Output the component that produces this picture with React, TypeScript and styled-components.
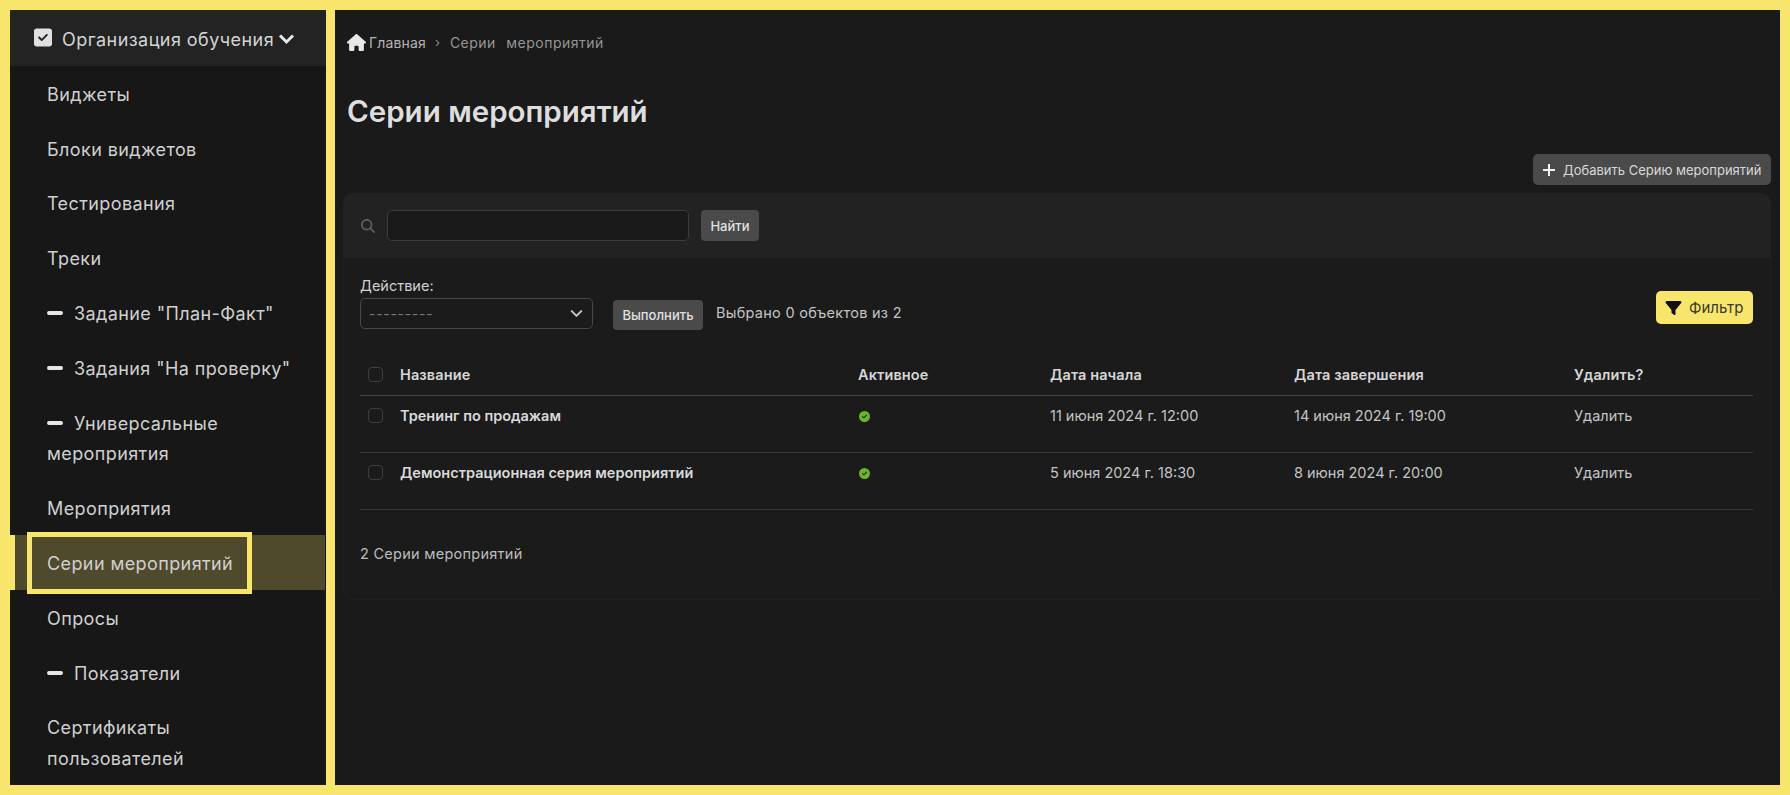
import styled, { createGlobalStyle } from "styled-components";
import { FaHouse, FaFilter, FaMagnifyingGlass, FaCircleCheck, FaSquareCheck } from "react-icons/fa6";
import { FiChevronDown } from "react-icons/fi";

const GlobalStyle = createGlobalStyle`
    html, body {
        margin: 0;
        padding: 0;
        background: #f7e66b;
    }
    body {
        font-family: Inter, "Noto Sans", "Liberation Sans", sans-serif;
        color: #d4d4d4;
    }
    * {
        box-sizing: border-box;
    }
`;

const Page = styled.div`
    width: 1790px;
    height: 795px;
    padding: 10px;
    display: grid;
    grid-template-columns: 316px 1445px;
    column-gap: 9px;
    background: #f7e66b;
    overflow: hidden;
`;

const Sidebar = styled.nav`
    background: #171717;
    overflow: hidden;
    display: flex;
    flex-direction: column;
`;

const SidebarHeader = styled.div`
    height: 56px;
    background: #232323;
    display: flex;
    align-items: center;
    padding-left: 24px;
    font-size: 18px;
    letter-spacing: 0.45px;
    color: #d4d4d4;
`;

const HeaderCheck = styled(FaSquareCheck)`
    width: 18px;
    height: 21px;
    color: #e0e0e0;
    margin-right: 10px;
`;

const HeaderText = styled.span`
    padding-top: 4px;
`;

const HeaderChevron = styled.svg`
    width: 17px;
    height: 12px;
    margin: 3px 0 0 4px;
    color: #e8e8e8;
`;

const MenuItem = styled.div<{ $active?: boolean }>`
    padding: 14px 30px 10px ${(p) => (p.$active ? "32px" : "37px")};
    font-size: 18px;
    line-height: 30.8px;
    letter-spacing: 0.4px;
    color: #d0d0d0;
    background: ${(p) => (p.$active ? "#4f4a2c" : "transparent")};
    border-left: ${(p) => (p.$active ? "5px solid #f7e66b" : "0")};
    margin-right: ${(p) => (p.$active ? "1px" : "0")};
    position: relative;
`;

const Dash = styled.span`
    display: inline-block;
    width: 16px;
    height: 4px;
    border-radius: 2px;
    background: #e6e6e6;
    margin-right: 11px;
    vertical-align: 5px;
`;

const Callout = styled.div`
    position: absolute;
    left: 12px;
    top: -3px;
    width: 225px;
    height: 62px;
    border: 5px solid #f7e66b;
    pointer-events: none;
`;

const Main = styled.main`
    background: #1a1a1a;
    padding: 0 9px 0 8px;
`;

const Breadcrumbs = styled.div`
    display: flex;
    align-items: center;
    height: 20px;
    margin: 22px 0 0 4px;
    font-size: 14px;
`;

const HomeIcon = styled(FaHouse)`
    width: 19px;
    height: 17px;
    color: #e8e8e8;
    margin-right: 3px;
`;

const Crumb = styled.span<{ $current?: boolean }>`
    color: ${(p) => (p.$current ? "#969696" : "#b4b4b4")};
    word-spacing: ${(p) => (p.$current ? "6px" : "0")};
    letter-spacing: ${(p) => (p.$current ? "0.5px" : "0.15px")};
`;

const CrumbSep = styled.span`
    margin: 0 10px 0 9px;
    color: #8a8a8a;
    font-size: 13px;
`;

const Title = styled.h1`
    margin: 37px 0 0 4px;
    height: 44px;
    font-size: 29.5px;
    line-height: 44px;
    font-weight: 600;
    color: #dedede;
`;

const Toolbar = styled.div`
    display: flex;
    justify-content: flex-end;
    margin-top: 21px;
    height: 31px;
`;

const AddButton = styled.button`
    width: 238px;
    height: 31px;
    background: #4a4a4a;
    border: 0;
    border-radius: 5px;
    color: #d9d9d9;
    font: inherit;
    font-size: 13px;
    display: flex;
    align-items: center;
    padding: 0 0 0 10px;
`;

const PlusIcon = styled.svg`
    width: 12px;
    height: 12px;
    color: #f2f2f2;
    margin-right: 8px;
`;

const Card = styled.section`
    margin-top: 8px;
    height: 407px;
    background: #1b1b1b;
    border-radius: 10px;
    box-shadow: inset 0 0 0 1px #1f1f1f;
    overflow: hidden;
`;

const SearchBar = styled.div`
    height: 65px;
    background: #222222;
    display: flex;
    align-items: center;
    padding-left: 18px;
`;

const SearchIcon = styled(FaMagnifyingGlass)`
    width: 14px;
    height: 14px;
    color: #5f5f5f;
    margin-right: 12px;
`;

const SearchInput = styled.div`
    width: 302px;
    height: 31px;
    background: #191919;
    border: 1px solid #3d3d3d;
    border-radius: 5px;
    margin-right: 12px;
`;

const GreyButton = styled.button<{ $wide?: boolean }>`
    height: ${(p) => (p.$wide ? "30px" : "31px")};
    width: ${(p) => (p.$wide ? "90px" : "58px")};
    background: #4a4a4a;
    border: 0;
    border-radius: 4px;
    color: #e0e0e0;
    font: inherit;
    font-size: 13px;
    font-weight: 500;
    padding: 0;
`;

const CardBody = styled.div`
    padding: 21px 18px 0 17px;
`;

const ActionRow = styled.div`
    display: flex;
    align-items: flex-end;
    height: 50px;
`;

const ActionField = styled.div`
    display: flex;
    flex-direction: column;
`;

const ActionLabel = styled.label`
    font-size: 14.5px;
    line-height: 19px;
    color: #d0d0d0;
    margin-bottom: 3px;
`;

const Select = styled.div`
    width: 233px;
    height: 31px;
    border: 1px solid #484848;
    border-radius: 5px;
    display: flex;
    align-items: center;
    justify-content: space-between;
    padding: 0 6px 0 8px;
    font-size: 14px;
    color: #7a7a7a;
    letter-spacing: 0.7px;
`;

const SelectChevron = styled(FiChevronDown)`
    width: 19px;
    height: 19px;
    color: #c8c8c8;
    stroke-width: 2.5;
`;

const RunGroup = styled.div`
    display: flex;
    align-items: center;
    margin-left: 20px;
    margin-bottom: -1px;
`;

const Selected = styled.span`
    margin: 0 0 6px 13px;
    font-size: 14.5px;
    letter-spacing: 0.27px;
    color: #c4c4c4;
`;

const FilterButton = styled.button`
    margin-left: auto;
    margin-bottom: 5px;
    width: 97px;
    height: 33px;
    background: #f7e66b;
    border: 0;
    border-radius: 5px;
    color: #3a3a2a;
    font: inherit;
    font-size: 15px;
    display: flex;
    align-items: center;
    gap: 7px;
    padding: 0 0 0 9px;
`;

const FilterIcon = styled(FaFilter)`
    width: 17px;
    height: 16px;
    color: #111;
`;

const Table = styled.div`
    margin-top: 27px;
`;

const Row = styled.div<{ $head?: boolean }>`
    display: grid;
    grid-template-columns: 40px 458px 192px 244px 280px 1fr;
    height: ${(p) => (p.$head ? "40px" : "57px")};
    padding-top: ${(p) => (p.$head ? "9px" : "10px")};
    border-bottom: 1px solid ${(p) => (p.$head ? "#444444" : "#3a3a3a")};
    font-size: 14.5px;
    line-height: 20px;
`;

const Check = styled.div`
    width: 15px;
    height: 15px;
    margin: 2px 0 0 8px;
    border: 1px solid #3f3f3f;
    border-radius: 4px;
`;

const HeadCell = styled.div`
    font-weight: 600;
    letter-spacing: 0.1px;
    color: #d6d6d6;
`;

const NameCell = styled.div`
    font-weight: 600;
    color: #d9d9d9;
`;

const Cell = styled.div`
    color: #c4c4c4;
`;

const ActiveIcon = styled(FaCircleCheck)`
    display: block;
    width: 11px;
    height: 11px;
    color: #6cb52a;
    margin: 5px 0 0 1px;
`;

const Footer = styled.div`
    margin-top: 34px;
    font-size: 14.5px;
    line-height: 20px;
    letter-spacing: 0.27px;
    color: #bdbdbd;
`;

const rows = [
    {
        name: "Тренинг по продажам",
        start: "11 июня 2024 г. 12:00",
        end: "14 июня 2024 г. 19:00",
    },
    {
        name: "Демонстрационная серия мероприятий",
        start: "5 июня 2024 г. 18:30",
        end: "8 июня 2024 г. 20:00",
    },
];

export default function App() {
    return (
        <>
            <GlobalStyle />
            <Page>
                <Sidebar>
                    <SidebarHeader>
                        <HeaderCheck />
                        <HeaderText>Организация обучения</HeaderText>
                        <HeaderChevron viewBox="0 0 17 12" fill="none">
                            <path d="M2 2.5 L8.5 9 L15 2.5" stroke="currentColor" strokeWidth="3" />
                        </HeaderChevron>
                    </SidebarHeader>
                    <MenuItem>Виджеты</MenuItem>
                    <MenuItem>Блоки виджетов</MenuItem>
                    <MenuItem>Тестирования</MenuItem>
                    <MenuItem>Треки</MenuItem>
                    <MenuItem>
                        <Dash />
                        Задание "План-Факт"
                    </MenuItem>
                    <MenuItem>
                        <Dash />
                        Задания "На проверку"
                    </MenuItem>
                    <MenuItem>
                        <Dash />
                        Универсальные мероприятия
                    </MenuItem>
                    <MenuItem>Мероприятия</MenuItem>
                    <MenuItem $active>
                        Серии мероприятий
                        <Callout />
                    </MenuItem>
                    <MenuItem>Опросы</MenuItem>
                    <MenuItem>
                        <Dash />
                        Показатели
                    </MenuItem>
                    <MenuItem>Сертификаты пользователей</MenuItem>
                </Sidebar>
                <Main>
                    <Breadcrumbs>
                        <HomeIcon />
                        <Crumb>Главная</Crumb>
                        <CrumbSep>›</CrumbSep>
                        <Crumb $current>Серии мероприятий</Crumb>
                    </Breadcrumbs>
                    <Title>Серии мероприятий</Title>
                    <Toolbar>
                        <AddButton>
                            <PlusIcon viewBox="0 0 12 12" fill="none">
                                <path d="M6 0 V12 M0 6 H12" stroke="currentColor" strokeWidth="2" />
                            </PlusIcon>
                            Добавить Серию мероприятий
                        </AddButton>
                    </Toolbar>
                    <Card>
                        <SearchBar>
                            <SearchIcon />
                            <SearchInput />
                            <GreyButton>Найти</GreyButton>
                        </SearchBar>
                        <CardBody>
                            <ActionRow>
                                <ActionField>
                                    <ActionLabel>Действие:</ActionLabel>
                                    <Select>
                                        ---------
                                        <SelectChevron />
                                    </Select>
                                </ActionField>
                                <RunGroup>
                                    <GreyButton $wide>Выполнить</GreyButton>
                                    <Selected>Выбрано 0 объектов из 2</Selected>
                                </RunGroup>
                                <FilterButton>
                                    <FilterIcon />
                                    Фильтр
                                </FilterButton>
                            </ActionRow>
                            <Table>
                                <Row $head>
                                    <Check />
                                    <HeadCell>Название</HeadCell>
                                    <HeadCell>Активное</HeadCell>
                                    <HeadCell>Дата начала</HeadCell>
                                    <HeadCell>Дата завершения</HeadCell>
                                    <HeadCell>Удалить?</HeadCell>
                                </Row>
                                {rows.map((r) => (
                                    <Row key={r.name}>
                                        <Check />
                                        <NameCell>{r.name}</NameCell>
                                        <Cell>
                                            <ActiveIcon />
                                        </Cell>
                                        <Cell>{r.start}</Cell>
                                        <Cell>{r.end}</Cell>
                                        <Cell>Удалить</Cell>
                                    </Row>
                                ))}
                            </Table>
                            <Footer>2 Серии мероприятий</Footer>
                        </CardBody>
                    </Card>
                </Main>
            </Page>
        </>
    );
}
